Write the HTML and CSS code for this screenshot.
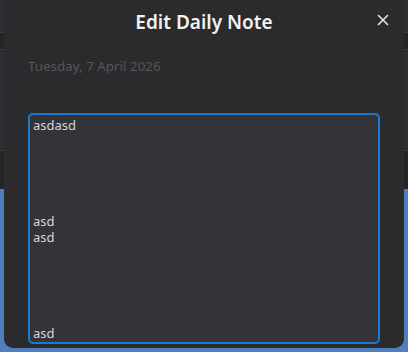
FILE: index.html
```html
<!DOCTYPE html>
<html>
<head>
<meta charset="utf-8">
<link rel="stylesheet" href="styles.css">
</head>
<body>
<div class="page">
  <div class="bar bar-top"></div>
  <div class="bar bar-tabs"></div>
  <div class="bar bar-main"></div>
  <div class="bar bar-tool"></div>
  <div class="bar bar-blue"></div>
</div>
<div class="modal">
  <div class="modal-header">
    <h1 class="modal-title">Edit Daily Note</h1>
    <svg class="close" width="12" height="12" viewBox="0 0 12 12"><path d="M1.5 1.5 L10.5 10.5 M10.5 1.5 L1.5 10.5" stroke="#e6e6e6" stroke-width="1.6" stroke-linecap="round" fill="none"/></svg>
  </div>
  <div class="modal-body">
    <div class="date">Tuesday, 7 April 2026</div>
    <textarea class="note" spellcheck="false">asdasd





asd
asd





asd</textarea>
  </div>
</div>
</body>
</html>
```
FILE: styles.css
```css
html, body {
  margin: 0;
  padding: 0;
  width: 408px;
  height: 352px;
  overflow: hidden;
  background: #4f7fbd;
}
.page {
  display: flex;
  flex-direction: column;
  height: 352px;
}
.bar-top { height: 32px; background: #2d2e31; border-bottom: 1px solid #3b3c3f; }
.bar-tabs { height: 16px; background: #242527; border-bottom: 1px solid #3b3c3f; }
.bar-main { height: 100px; background: #2c2d30; border-bottom: 1px solid #3b3c3f; }
.bar-tool { height: 38px; background: #232426; }
.bar-blue { flex: 1; background: #4f7fbd; }
.modal {
  position: absolute;
  left: 4px;
  top: 0;
  width: 400px;
  height: 348px;
  background: #2b2b2d;
  border-radius: 0 0 9px 9px;
  box-sizing: border-box;
  font-family: "Noto Sans", "Open Sans", sans-serif;
  display: flex;
  flex-direction: column;
}
.modal-header {
  position: relative;
  height: 42px;
  display: flex;
  align-items: center;
  justify-content: center;
}
.modal-title {
  margin: 0;
  font-size: 19px;
  font-weight: 600;
  color: #f2f2f2;
  position: relative;
  top: 1px;
}
.close {
  position: absolute;
  right: 15px;
  top: 14px;
}
.modal-body {
  padding: 14px 24px 0 24px;
  display: flex;
  flex-direction: column;
}
.date {
  font-size: 13.4px;
  color: #55565a;
  line-height: 20px;
}
.note {
  margin-top: 37px;
  width: 352px;
  height: 231px;
  box-sizing: border-box;
  background: #333338;
  border: 2px solid #1a7ad0;
  border-radius: 5px;
  padding: 2px 3px;
  color: #d6d6d6;
  font-family: "Noto Sans", "Open Sans", sans-serif;
  font-size: 13px;
  line-height: 16px;
  resize: none;
  overflow: hidden;
  outline: none;
}
```
